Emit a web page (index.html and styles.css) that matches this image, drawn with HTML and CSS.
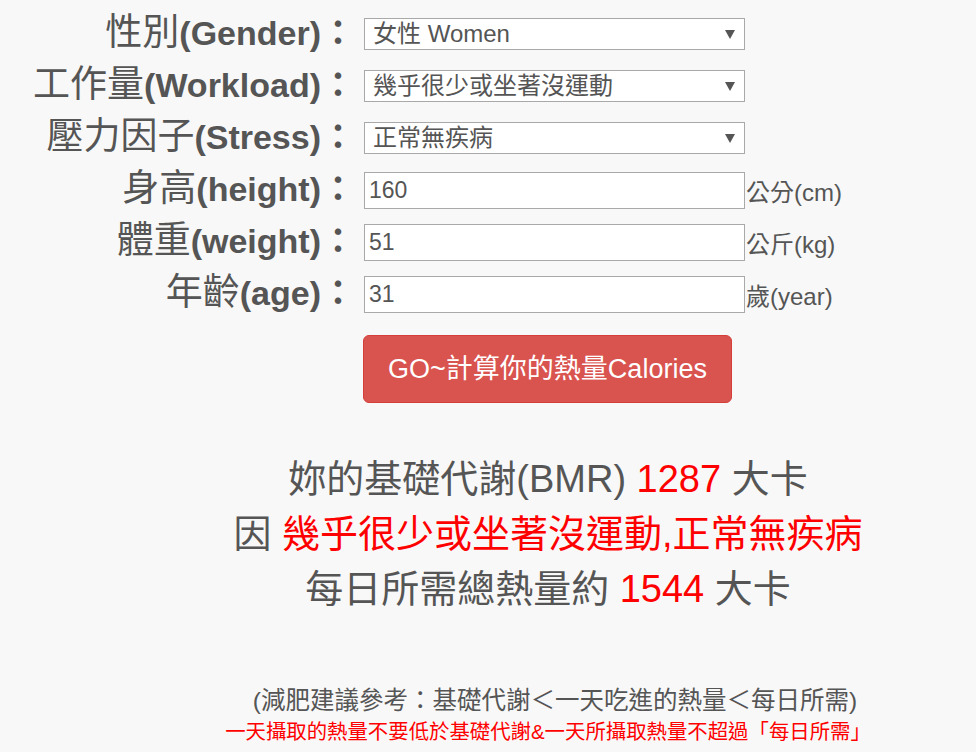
FILE: index.html
```html
<!DOCTYPE html>
<html lang="zh-Hant">
<head>
<meta charset="utf-8">
<title>熱量計算</title>
<link rel="stylesheet" href="styles.css">
</head>
<body>
<div class="page">
  <form class="calc">
    <div class="row">
      <label class="lbl"><span class="zh">性別</span>(Gender)：</label>
      <div class="select-wrap"><select class="ctrl sel"><option>女性 Women</option></select></div>
    </div>
    <div class="row">
      <label class="lbl"><span class="zh">工作量</span>(Workload)：</label>
      <div class="select-wrap"><select class="ctrl sel"><option>幾乎很少或坐著沒運動</option></select></div>
    </div>
    <div class="row">
      <label class="lbl"><span class="zh">壓力因子</span>(Stress)：</label>
      <div class="select-wrap"><select class="ctrl sel"><option>正常無疾病</option></select></div>
    </div>
    <div class="row">
      <label class="lbl"><span class="zh">身高</span>(height)：</label>
      <input class="ctrl inp" type="text" value="160">
      <span class="unit">公分(cm)</span>
    </div>
    <div class="row">
      <label class="lbl"><span class="zh">體重</span>(weight)：</label>
      <input class="ctrl inp" type="text" value="51">
      <span class="unit">公斤(kg)</span>
    </div>
    <div class="row">
      <label class="lbl"><span class="zh">年齡</span>(age)：</label>
      <input class="ctrl inp" type="text" value="31">
      <span class="unit">歲(year)</span>
    </div>
    <div class="actions">
      <button type="button" class="go">GO~計算你的熱量Calories</button>
    </div>
  </form>

  <div class="results">
    <p class="line">妳的基礎代謝(BMR) <span class="hl">1287</span> 大卡</p>
    <p class="line">因 <span class="hl">幾乎很少或坐著沒運動,正常無疾病</span></p>
    <p class="line">每日所需總熱量約 <span class="hl">1544</span> 大卡</p>
  </div>

  <div class="notes">
    <p class="note">(減肥建議參考：基礎代謝＜一天吃進的熱量＜每日所需)</p>
    <p class="warn">一天攝取的熱量不要低於基礎代謝&amp;一天所攝取熱量不超過「每日所需」</p>
  </div>
</div>
</body>
</html>
```

FILE: styles.css
```css
html, body {
  margin: 0;
  padding: 0;
  background: #f8f8f8;
}

body {
  font-family: "Liberation Sans", "Noto Sans CJK TC", sans-serif;
  color: #555;
}

.page {
  padding-top: 8px;
}

.calc {
  margin: 0;
}

.row {
  display: flex;
  align-items: center;
  height: 52px;
}

.lbl {
  width: 355px;
  margin-right: 9px;
  padding-bottom: 4px;
  text-align: right;
  font-size: 34px;
  font-weight: bold;
  line-height: 1;
  white-space: nowrap;
}

.lbl .zh {
  font-size: 37px;
  font-weight: normal;
}

.select-wrap {
  position: relative;
  width: 381px;
  height: 32px;
}

.select-wrap::after {
  content: "";
  position: absolute;
  right: 10px;
  top: 12px;
  width: 0;
  height: 0;
  border-left: 5px solid transparent;
  border-right: 5px solid transparent;
  border-top: 9px solid #555;
  pointer-events: none;
}

.ctrl {
  box-sizing: border-box;
  width: 381px;
  margin: 0;
  border: 1px solid #a9a9a9;
  border-radius: 0;
  background: #fff;
  color: #555;
  font-family: "Liberation Sans", "Noto Sans CJK TC", sans-serif;
  font-size: 23px;
  outline: none;
}

.sel {
  height: 32px;
  padding: 0 30px 0 8px;
  font-size: 24px;
  line-height: 30px;
  -webkit-appearance: none;
  appearance: none;
}

.inp {
  height: 37px;
  padding: 0 4px;
}

.unit {
  margin-left: 1px;
  font-size: 24px;
  white-space: nowrap;
}

.actions {
  padding-left: 363px;
  margin-top: 15px;
}

.go {
  box-sizing: border-box;
  width: 369px;
  height: 68px;
  margin: 0;
  padding: 0 0 6px;
  border: 1px solid #d43f3a;
  border-radius: 6px;
  background: #d9534f;
  color: #fff;
  font-family: "Liberation Sans", "Noto Sans CJK TC", sans-serif;
  font-size: 27px;
  cursor: pointer;
}

.results {
  margin: 49px 0 0 120px;
  text-align: center;
}

.line {
  margin: 0;
  font-size: 38px;
  line-height: 55px;
  white-space: nowrap;
}

.hl {
  color: #ff0000;
}

.notes {
  margin: 68px 0 0 120px;
  text-align: center;
}

.note {
  margin: 0;
  padding-left: 14px;
  font-size: 24.5px;
  line-height: 32px;
  white-space: nowrap;
}

.warn {
  margin: 0;
  color: #ff0000;
  font-size: 20.4px;
  line-height: 30px;
  white-space: nowrap;
}
```
